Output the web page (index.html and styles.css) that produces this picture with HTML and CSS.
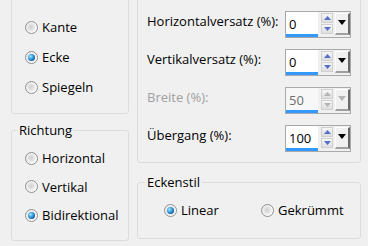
FILE: index.html
```html
<html>
<head>
    <title>Nahtloses Kacheln</title>
    <meta charset="UTF-8"/>
    <link rel="stylesheet" href="styles.css">
</head>
<body>
    <div class="dialog">
        <div class="col col-left">
            <fieldset class="group group-method">
                <legend>Kachelmethode</legend>
                <div class="opts">
                    <label class="opt"><span class="radio"></span>Kante</label>
                    <label class="opt"><span class="radio on"></span>Ecke</label>
                    <label class="opt"><span class="radio"></span>Spiegeln</label>
                </div>
            </fieldset>
            <fieldset class="group group-dir">
                <legend>Richtung</legend>
                <div class="opts">
                    <label class="opt"><span class="radio"></span>Horizontal</label>
                    <label class="opt"><span class="radio"></span>Vertikal</label>
                    <label class="opt"><span class="radio on"></span>Bidirektional</label>
                </div>
            </fieldset>
        </div>
        <div class="col col-right">
            <fieldset class="group group-settings">
                <legend>Einstellungen</legend>
                <div class="rows">
                    <div class="row">
                        <span class="lbl">Horizontalversatz (%):</span>
                        <div class="spin">
                            <span class="field">0</span>
                            <span class="arrows">
                                <span class="arr"><svg width="7" height="4" viewBox="0 0 7 4"><polygon points="0,4 3.5,0 7,4"/></svg></span>
                                <span class="arr"><svg width="7" height="4" viewBox="0 0 7 4"><polygon points="0,0 3.5,4 7,0"/></svg></span>
                            </span>
                            <span class="drop"><svg width="8" height="5" viewBox="0 0 8 5"><polygon points="0,0 8,0 4,5"/></svg></span>
                        </div>
                    </div>
                    <div class="row">
                        <span class="lbl">Vertikalversatz (%):</span>
                        <div class="spin">
                            <span class="field">0</span>
                            <span class="arrows">
                                <span class="arr"><svg width="7" height="4" viewBox="0 0 7 4"><polygon points="0,4 3.5,0 7,4"/></svg></span>
                                <span class="arr"><svg width="7" height="4" viewBox="0 0 7 4"><polygon points="0,0 3.5,4 7,0"/></svg></span>
                            </span>
                            <span class="drop"><svg width="8" height="5" viewBox="0 0 8 5"><polygon points="0,0 8,0 4,5"/></svg></span>
                        </div>
                    </div>
                    <div class="row disabled">
                        <span class="lbl">Breite (%):</span>
                        <div class="spin">
                            <span class="field">50</span>
                            <span class="arrows">
                                <span class="arr"><svg width="7" height="4" viewBox="0 0 7 4"><polygon points="0,4 3.5,0 7,4"/></svg></span>
                                <span class="arr"><svg width="7" height="4" viewBox="0 0 7 4"><polygon points="0,0 3.5,4 7,0"/></svg></span>
                            </span>
                            <span class="drop"><svg width="8" height="5" viewBox="0 0 8 5"><polygon points="0,0 8,0 4,5"/></svg></span>
                        </div>
                    </div>
                    <div class="row">
                        <span class="lbl">Übergang (%):</span>
                        <div class="spin">
                            <span class="field">100</span>
                            <span class="arrows">
                                <span class="arr"><svg width="7" height="4" viewBox="0 0 7 4"><polygon points="0,4 3.5,0 7,4"/></svg></span>
                                <span class="arr"><svg width="7" height="4" viewBox="0 0 7 4"><polygon points="0,0 3.5,4 7,0"/></svg></span>
                            </span>
                            <span class="drop"><svg width="8" height="5" viewBox="0 0 8 5"><polygon points="0,0 8,0 4,5"/></svg></span>
                        </div>
                    </div>
                </div>
            </fieldset>
            <fieldset class="group group-corner">
                <legend>Eckenstil</legend>
                <div class="opts">
                    <label class="opt"><span class="radio on"></span>Linear</label>
                    <label class="opt"><span class="radio"></span>Gekrümmt</label>
                </div>
            </fieldset>
        </div>
    </div>
</body>
</html>
```
FILE: styles.css
```css
body {
    margin: 0;
    background: #f0f0f0;
    font-family: "Open Sans", "Noto Sans", sans-serif;
    font-size: 13px;
    color: #000;
    overflow: hidden;
}
.dialog {
    display: flex;
    gap: 8px;
    margin-top: -16px;
    padding-left: 11px;
}
.col {
    display: flex;
    flex-direction: column;
}
.col-left {
    width: 118px;
    gap: 8px;
}
.col-right {
    width: 224px;
    gap: 11px;
}
.group {
    margin: 0;
    padding: 0;
    min-width: 0;
    box-sizing: border-box;
    border: 1px solid #d9dde0;
    border-radius: 3px;
}
.group legend {
    padding: 0 2px;
    margin-left: 5px;
    line-height: 16px;
}
.col-right .group legend {
    margin-left: 7px;
}
.group-method { height: 130px; }
.group-dir { height: 119px; }
.group-settings { height: 179px; }
.group-corner { height: 65px; }

.opt {
    display: flex;
    align-items: center;
    gap: 4px;
    height: 30px;
    line-height: 16px;
}
.col-left .opts {
    padding: 12px 0 0 13px;
}
.group-dir .opts {
    padding-top: 6px;
}
.group-dir .opt {
    height: 28.5px;
}
.group-corner .opts {
    display: grid;
    grid-template-columns: 97px auto;
    padding: 10px 0 0 26px;
}
.group-corner .opt {
    height: 20px;
}

.radio {
    position: relative;
    flex: none;
    width: 13px;
    height: 13px;
    box-sizing: border-box;
    border-radius: 50%;
    border: 1px solid #8e8f8f;
    background: radial-gradient(circle at 45% 45%, #cfcfcf 0, #e4e4e4 35%, #f7f7f7 62%, #fff 70%, #eee 100%);
}
.radio.on::after {
    content: "";
    position: absolute;
    left: 2px;
    top: 2px;
    width: 7px;
    height: 7px;
    border-radius: 50%;
    background: radial-gradient(circle at 35% 35%, #a8e6ff 0, #3aa0e0 40%, #115a9c 75%, #0b325e 100%);
}

.rows {
    display: flex;
    flex-direction: column;
    gap: 11px;
    padding: 11px 9px 0 9px;
}
.row {
    display: flex;
    justify-content: space-between;
    align-items: flex-start;
}
.lbl {
    line-height: 18px;
    padding-top: 1px;
}
.spin {
    display: flex;
    width: 66px;
    height: 27px;
    box-sizing: border-box;
    border: 1px solid #a9a9a9;
    background: #f0f0f0;
}
.field {
    width: 30px;
    height: 22px;
    padding-left: 3px;
    background: #fff;
    border-bottom: 3px solid #3399ff;
    line-height: 24px;
}
.arrows {
    display: flex;
    flex-direction: column;
    gap: 1px;
    margin: 1px 0 0 3px;
}
.arr {
    display: flex;
    align-items: center;
    justify-content: center;
    width: 12px;
    height: 10px;
    box-sizing: border-box;
    border: 1px solid #d0d0d0;
    background: linear-gradient(#f6f6f6, #dedede);
}
.arr svg {
    fill: #5470c8;
}
.drop {
    display: flex;
    justify-content: center;
    padding-top: 6px;
    width: 15px;
    height: 22px;
    box-sizing: border-box;
    margin: 1px 0 0 2px;
    border-left: 1px solid #fff;
    border-top: 1px solid #fff;
    border-right: 2px solid #696969;
    border-bottom: 2px solid #a0a0a0;
    background: #f0f0f0;
}
.drop svg {
    fill: #000;
}
.disabled .lbl {
    color: #a0a0a0;
}
.disabled .field {
    color: #6d6d6d;
    background: #f7f7f7;
}
.disabled .arr svg,
.disabled .drop svg {
    fill: #b4b4b4;
}
```
